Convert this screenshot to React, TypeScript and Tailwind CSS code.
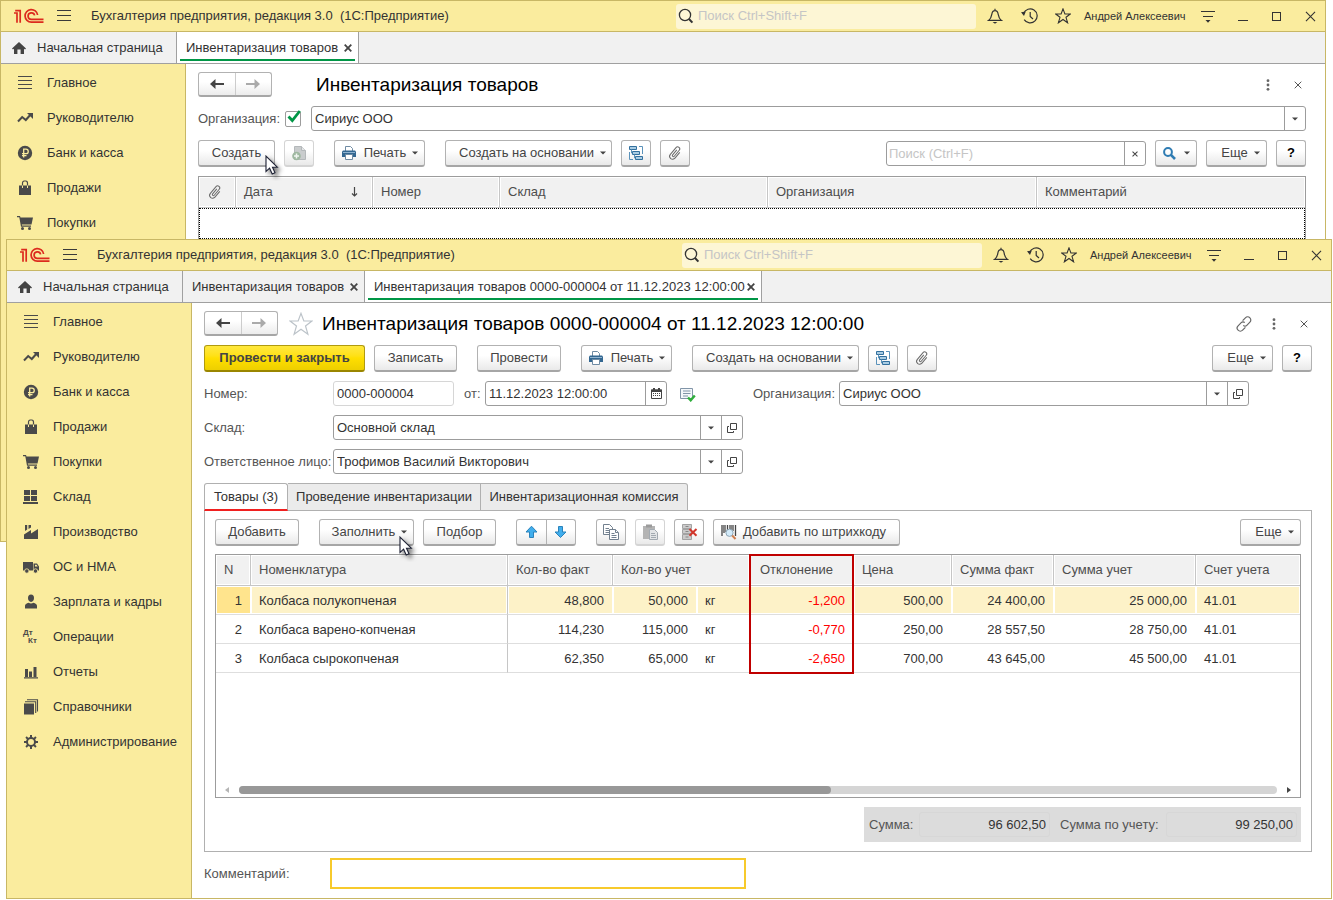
import React from "react";

type Glyph = { className?: string };

/* ---------- window chrome icons ---------- */

const Logo = () => (
  <svg width="30" height="16" viewBox="0 0 30 16" fill="none" stroke="#dc2a1e" strokeWidth="1.7" aria-label="1C">
    <path d="M0 5H3V14.800M1.200 2.600H6.200V14.800" />
    <path d="M23.600 7A6.300 6.300 0 1 0 17.300 14.200H29.500" />
    <path d="M20.600 7.400A3.300 3.300 0 1 0 17.300 11.400H29.500" />
  </svg>
);

const Burger = () => (
  <svg width="14" height="12" viewBox="0 0 14 12" stroke="#3a3a3a" strokeWidth="1">
    <path d="M0 .5H14M0 5.500H14M0 10.500H14" />
  </svg>
);

const SearchThin = () => (
  <svg width="16" height="16" viewBox="0 0 16 16" fill="none" stroke="#333" strokeWidth="1.300">
    <circle cx="7" cy="7" r="5.600" />
    <path d="M10.800 10.800L14.400 14.600" strokeWidth="2" />
  </svg>
);

const Bell = () => (
  <svg width="16" height="16" viewBox="0 0 16 16" fill="none" stroke="#333" strokeWidth="1.200">
    <path d="M8 .8V2.600M1.600 12.400H14.400C12 10.600 11.600 9 11.200 6.400C10.900 4 9.700 2.700 8 2.700S5.100 4 4.800 6.400C4.400 9 4 10.600 1.600 12.400Z" />
    <path d="M5.600 14H10.400L8 15.800Z" fill="#333" stroke="none" />
  </svg>
);

const History = () => (
  <svg width="17" height="16" viewBox="0 0 17 16" fill="none" stroke="#333" strokeWidth="1.200">
    <path d="M2.600 5.400A7 7 0 1 1 3.200 11.600" />
    <path d="M9.200 4V8.400L12 11" />
    <path d="M0 4.200L4.800 3.600L3 8Z" fill="#333" stroke="none" />
  </svg>
);

const StarThin = ({ size = 16, color = "#333" }: { size?: number; color?: string }) => (
  <svg width={size} height={size} viewBox="0 0 16 16" fill="none" stroke={color} strokeWidth={size > 20 ? 0.8 : 1.1}>
    <path d="M8 .9L9.900 6H15.300L11 9.300L12.600 14.800L8 11.500L3.400 14.800L5 9.300L.7 6H6.100Z" />
  </svg>
);

const Filter = () => (
  <svg width="14" height="13" viewBox="0 0 14 13" stroke="#333">
    <path d="M0 1.500H14M2 6.500H12" />
    <path d="M4.500 10H9.500L7 12.800Z" fill="#333" stroke="none" />
  </svg>
);

const Home = () => (
  <svg width="14" height="12" viewBox="0 0 14 12" fill="#444">
    <path d="M7 0L14 6.500L13 7.500L12 6.700V12H8.600V7.600H5.400V12H2V6.700L1 7.500L0 6.500Z" />
  </svg>
);

const Cross = ({ size = 8, width = 1.8, color = "#444" }: { size?: number; width?: number; color?: string }) => (
  <svg width={size} height={size} viewBox="0 0 8 8" stroke={color} strokeWidth={width} fill="none">
    <path d="M.7 .7L7.300 7.300M7.300 .7L.7 7.300" />
  </svg>
);

const Dots = () => (
  <svg width="4" height="12" viewBox="0 0 4 12" fill="#666">
    <circle cx="2" cy="1.700" r="1.400" />
    <circle cx="2" cy="6" r="1.400" />
    <circle cx="2" cy="10.300" r="1.400" />
  </svg>
);

const Chain = () => (
  <svg width="16" height="16" viewBox="0 0 16 16" fill="none" stroke="#666" strokeWidth="1.200">
    <path d="M6.600 4.600L9.400 1.800C10.600 .6 12.700 .6 13.900 1.800C15.100 3 15.100 5 13.900 6.200L10.800 9.300C9.800 10.300 8.200 10.300 7.300 9.300" />
    <path d="M9.400 11.400L6.600 14.200C5.400 15.400 3.300 15.400 2.100 14.200C.9 13 .9 11 2.100 9.800L5.200 6.700C6.200 5.700 7.800 5.700 8.700 6.700" />
  </svg>
);

/* ---------- sidebar icons ---------- */

const G = ({ children }: { children: React.ReactNode }) => (
  <svg width="16" height="16" viewBox="0 0 16 16" fill="#4a4a4a" className="shrink-0">
    {children}
  </svg>
);

const IMain = () => <G><path d="M1 1H15V2H1ZM1 5H15V6H1ZM1 9H15V10H1ZM1 13H15V14H1Z" /></G>;
const ITrend = () => (
  <G>
    <path d="M1 11.500L5.200 7L8.800 10L13.200 5" fill="none" stroke="#4a4a4a" strokeWidth="2" />
    <path d="M10 3H16V9Z" />
  </G>
);
const IRuble = () => (
  <G>
    <circle cx="8" cy="8" r="7.200" />
    <path d="M6.700 12.500V4.200H9A2.200 2.200 0 0 1 9 8.700H5M5 10.700H9.500" fill="none" stroke="#faec9e" strokeWidth="1.300" />
  </G>
);
const IBag = () => (
  <G>
    <path d="M2 5.500H14V15H2Z" />
    <path d="M5.500 7.500V3.200C5.500 1.800 6.200 1 7.200 1H8.800C9.800 1 10.500 1.800 10.500 3.200V7.500" fill="none" stroke="#4a4a4a" strokeWidth="1.200" />
    <path d="M5.500 5.500V8M10.500 5.500V8" stroke="#faec9e" strokeWidth="1" />
  </G>
);
const ICart = () => (
  <G>
    <path d="M0 1H3L3.500 2.500H16L14.500 9.500H4.800L5 10.500H14V11.800H4L2.300 2.300H0Z" />
    <circle cx="5.500" cy="13.500" r="1.500" />
    <circle cx="12.500" cy="13.500" r="1.500" />
  </G>
);
const IStore = () => <G><path d="M1 1H7V6H1ZM8 1H14V6H8ZM1 7H7V12H1ZM8 7H14V12H8ZM0 13H15V15H0Z" /></G>;
const IFactory = () => (
  <G>
    <path d="M1 15V10.500L8 6V9.500L15 5V15Z" />
    <path d="M2 1H4.200V5.500L2 7ZM5.500 1H8V3.500L5.500 5Z" />
  </G>
);
const ITruck = () => (
  <G>
    <path d="M0 3H10V11.500H0ZM10.500 4.500H14L16 7.500V11.500H10.500Z" />
    <path d="M12 5.700H13.500L14.700 7.500H12Z" fill="#faec9e" />
    <circle cx="3.800" cy="12" r="2.200" stroke="#faec9e" strokeWidth=".8" />
    <circle cx="12.500" cy="12" r="2.200" stroke="#faec9e" strokeWidth=".8" />
  </G>
);
const IPerson = () => (
  <G>
    <path d="M8 .5C10 .5 11 1.800 11 3.800C11 6.100 9.800 8 8 8S5 6.100 5 3.800C5 1.800 6 .5 8 .5Z" />
    <path d="M2 14.500V11.800C2 10.300 3.500 9.500 5.600 8.700C7 9.800 9 9.800 10.400 8.700C12.500 9.500 14 10.300 14 11.800V14.500Z" />
  </G>
);
const IDebit = () => (
  <span className="flex h-4 w-4 shrink-0 flex-col text-[8px] leading-[8px] font-bold text-[#4a4a4a]">
    <span>Дт</span>
    <span className="pl-[5px]">Кт</span>
  </span>
);
const IBars = () => <G><path d="M2 5H5V13H2ZM6 7.500H9V13H6ZM10.500 3H13.500V13H10.500ZM1 13.200H15V14.500H1Z" /></G>;
const IBooks = () => (
  <G>
    <path d="M1 4.500H11V15.500H1Z" />
    <path d="M2 2.700H12.700V14M4 .8H14.500V12.500" fill="none" stroke="#4a4a4a" strokeWidth="1.100" />
  </G>
);
const IGear = () => (
  <G>
    <circle cx="8" cy="8" r="4" fill="none" stroke="#4a4a4a" strokeWidth="2" />
    <path
      d="M8 1V4M8 12V15M1 8H4M12 8H15M3.050 3.050L5.100 5.100M10.900 10.900L12.950 12.950M3.050 12.950L5.100 10.900M10.900 5.100L12.950 3.050"
      stroke="#4a4a4a"
      strokeWidth="2"
    />
  </G>
);

/* ---------- toolbar icons ---------- */

const Caret = ({ className = "" }: Glyph) => (
  <svg width="6" height="4" viewBox="0 0 6 4" fill="#444" className={className}>
    <path d="M0 .5H6L3 3.500Z" />
  </svg>
);

const Arrow = ({ dim = false, flip = false }: { dim?: boolean; flip?: boolean }) => (
  <svg width="14" height="10" viewBox="0 0 14 10" fill={dim ? "#aaa" : "#444"}>
    {flip ? <path d="M14 5L8.500 0V4H0V6H8.500V10Z" /> : <path d="M0 5L5.500 0V4H14V6H5.500V10Z" />}
  </svg>
);

const Printer = () => (
  <svg width="16" height="16" viewBox="0 0 16 16">
    <path d="M4.500 6V1.500H9.500L11.500 3.500V6" fill="#fff" stroke="#6f8ba3" />
    <path d="M2 5.500H14L15 6.500V12H1V6.500Z" fill="#336791" />
    <path d="M2 7H14V8H2Z" fill="#8fb3d0" />
    <path d="M4.500 9.500H11.500V14.500H4.500Z" fill="#fff" stroke="#6f8ba3" />
  </svg>
);

const Structure = () => (
  <svg width="16" height="16" viewBox="0 0 16 16" fill="#a9cce3" stroke="#33709e" strokeWidth="1">
    <path d="M1.500 1.500H8.500V4.500H1.500ZM4.500 6.500H11.500V9.500H4.500ZM7.500 11.500H14.500V14.500H7.500Z" />
    <path d="M11 1.500H14.500V9M5 14.500H1.500V7M3.500 4.500V8H4.500M6.500 9.500V13H7.500" fill="none" stroke="#5b93bb" />
  </svg>
);

const Clip = () => (
  <svg width="16" height="16" viewBox="0 0 16 16" fill="none" stroke="#6a6a6a" strokeWidth="1">
    <path
      transform="rotate(40 8 8)"
      d="M11.300 4.500V12A3 3 0 0 1 5.300 12V3.200A2.100 2.100 0 0 1 9.500 3.200V11A1 1 0 0 1 7.400 11V4.500"
    />
  </svg>
);

const PageAdd = () => (
  <svg width="16" height="16" viewBox="0 0 16 16">
    <path d="M3.500 1.500H10.500L14.500 5.500V14.500H3.500Z" fill="#c9cccd" stroke="#b4b8ba" />
    <path d="M10.500 1.500V5.500H14.500" fill="#e4e6e7" stroke="#b4b8ba" />
    <circle cx="5.500" cy="11" r="4.300" fill="#9fb8a1" />
    <path d="M5.500 8.500V13.500M3 11H8" stroke="#f1f5f1" strokeWidth="1.500" />
  </svg>
);

const UpDown = ({ down = false }: { down?: boolean }) => (
  <svg width="13" height="14" viewBox="0 0 13 14" fill="#41aeed" stroke="#2b83bb" strokeWidth="1">
    {down ? <path d="M6.500 12.500L1 7H4.500V1.500H8.500V7H12Z" /> : <path d="M6.500 1.200L1 7H4.500V12.500H8.500V7H12Z" />}
  </svg>
);

const CopyPages = () => (
  <svg width="16" height="16" viewBox="0 0 16 16" fill="#fff" stroke="#72808f">
    <path d="M.5 .5H6.500L9.500 3.500V10.500H.5Z" />
    <path d="M2.500 4.500H6M2.500 6.500H6M2.500 8.500H6" />
    <path d="M6.500 5.500H12.500L15.500 8.500V15.500H6.500Z" />
    <path d="M12.500 5.500V8.500H15M8.500 9.500H11.500M8.500 11.500H13.500M8.500 13.500H13.500" />
  </svg>
);

const Paste = () => (
  <svg width="16" height="16" viewBox="0 0 16 16">
    <path d="M1 2H13V15H1Z" fill="#b4b4b4" />
    <path d="M4 .5H10V3.500H4Z" fill="#9b9b9b" />
    <path d="M7.500 5.500H12.500L15.500 8.500V15.500H7.500Z" fill="#e3e5e7" stroke="#a3aab1" />
    <path d="M9 9.500H13M9 11.500H14M9 13.500H14" stroke="#a3aab1" />
  </svg>
);

const ClearRows = () => (
  <svg width="17" height="16" viewBox="0 0 17 16">
    <path d="M1.500 .5H10.500V4.500H1.500ZM1.500 5.500H10.500V9.500H1.500ZM1.500 10.500H10.500V15.500H1.500Z" fill="#cbcbcb" stroke="#a3a3a3" />
    <path d="M4.500 2.500H7.500M4.500 7.500H7.500M4.500 13H7.500" stroke="#888" />
    <path d="M8.500 5L15.500 11.800M15.500 5L8.500 11.800" stroke="#d2372c" strokeWidth="2" />
  </svg>
);

const Barcode = () => (
  <svg width="16" height="16" viewBox="0 0 16 16" fill="none">
    <path d="M1 1V12M3 1V9M6.500 1V7M9 1V5M11 1V6M14.500 1V12" stroke="#444" strokeWidth="1.300" />
    <path d="M4.500 1V8M12.500 1V7" stroke="#555" strokeWidth=".7" />
    <circle cx="8.500" cy="8.800" r="3.600" fill="#d3ebfa" stroke="#8da5b5" />
    <path d="M11.200 11.500L14.500 15" stroke="#cf7f4f" strokeWidth="2" />
  </svg>
);

const SearchBlue = () => (
  <svg width="13" height="13" viewBox="0 0 13 13" fill="none" stroke="#2f7cb3">
    <circle cx="5" cy="5" r="3.900" strokeWidth="2" />
    <path d="M7.700 7.700L12 12" strokeWidth="2.600" />
  </svg>
);

const Calendar = () => (
  <svg width="11" height="11" viewBox="0 0 11 11">
    <path d="M.5 2H10.500V10.500H.5Z" fill="#fff" stroke="#444" />
    <path d="M0 1.500H11V4H0ZM2 0H4V2H2ZM7 0H9V2H7Z" fill="#444" />
    <path d="M2 5.500H9M2 7.500H9" stroke="#444" strokeDasharray="1 1" />
  </svg>
);

const OpenForm = () => (
  <svg width="10" height="10" viewBox="0 0 10 10" fill="none" stroke="#444">
    <path d="M3.500 .5H9.500V6.500H3.500Z" />
    <path d="M2 3.500H.5V9.500H6.500V8" />
  </svg>
);

const ListCheck = () => (
  <svg width="16" height="14" viewBox="0 0 16 14">
    <path d="M.5 .5H12.500V10.500H.5Z" fill="#f4f7fa" stroke="#8195a8" />
    <path d="M3 3H10.500M3 5.500H10.500M3 8H8" stroke="#8195a8" />
    <path d="M8 9.500L10.700 12.300L14.800 7.500" fill="none" stroke="#2fae3c" strokeWidth="2.400" />
  </svg>
);

const Pointer = ({ className = "" }: Glyph) => (
  <svg width="20" height="26" viewBox="0 0 20 26" className={"pointer-events-none absolute z-10 " + className}>
    <path
      d="M1 1V16.500L4.600 13.200L7.200 19L10 17.800L7.500 12.200H12.300Z"
      fill="#fff"
      stroke="#1e2235"
      strokeWidth="1.100"
      className="drop-shadow-[3px_3px_2px_rgba(0,0,0,0.5)]"
    />
  </svg>
);

/* ---------- controls ---------- */

type BtnProps = {
  className?: string;
  children: React.ReactNode;
  label?: string;
  disabled?: boolean;
};

const Btn = ({ className = "", children, label, disabled }: BtnProps) => (
  <button
    type="button"
    aria-label={label}
    disabled={disabled}
    className={
      "relative flex h-[27px] shrink-0 items-center justify-center rounded-[3px] border border-b-2 bg-linear-to-b from-white from-40% to-[#e9e9e9] whitespace-nowrap text-[#444] " +
      (disabled ? "border-[#d4d4d4] " : "border-[#b2b2b2] border-b-[#a6a6a6] ") +
      className
    }
  >
    {children}
  </button>
);

const HelpBtn = () => (
  <Btn className="ml-[9px] w-[30px] font-bold" label="Справка">
    <span className="text-black">?</span>
  </Btn>
);

const NavButtons = () => (
  <div className="flex h-[25px] w-[74px] shrink-0 rounded-[3px] border border-b-2 border-[#b2b2b2] border-b-[#a6a6a6] bg-linear-to-b from-white from-40% to-[#ececec]">
    <button type="button" aria-label="Назад" className="flex flex-1 items-center justify-center border-r border-[#ccc]">
      <Arrow />
    </button>
    <button type="button" aria-label="Вперед" className="flex flex-1 items-center justify-center">
      <Arrow dim flip />
    </button>
  </div>
);

type FieldProps = { id: string; value: string; className?: string; open?: boolean; label?: string };

const Combo = ({ id, value, className = "", open = true, label }: FieldProps) => (
  <div className={"flex h-[25px] rounded-[3px] border border-[#9c9c9c] bg-white " + className}>
    <input
      id={id}
      aria-label={label}
      defaultValue={value}
      className="min-w-0 flex-1 bg-transparent px-[3px] text-[#333] outline-none"
    />
    <button type="button" aria-label="Выбрать" className="flex w-[21px] items-center justify-center border-l border-[#9c9c9c]">
      <Caret />
    </button>
    {open && (
      <button type="button" aria-label="Открыть" className="flex w-[21px] items-center justify-center border-l border-[#9c9c9c]">
        <OpenForm />
      </button>
    )}
  </div>
);

/* ---------- window frame ---------- */

const SECTIONS: { name: string; Icon: () => React.ReactElement }[] = [
  { name: "Главное", Icon: IMain },
  { name: "Руководителю", Icon: ITrend },
  { name: "Банк и касса", Icon: IRuble },
  { name: "Продажи", Icon: IBag },
  { name: "Покупки", Icon: ICart },
  { name: "Склад", Icon: IStore },
  { name: "Производство", Icon: IFactory },
  { name: "ОС и НМА", Icon: ITruck },
  { name: "Зарплата и кадры", Icon: IPerson },
  { name: "Операции", Icon: IDebit },
  { name: "Отчеты", Icon: IBars },
  { name: "Справочники", Icon: IBooks },
  { name: "Администрирование", Icon: IGear },
];

const TitleBar = () => (
  <header className="flex h-[31px] shrink-0 items-center border-b border-[#c8b765] bg-[#faec9e] pr-[9px] pl-[13px] text-[#333]">
    <Logo />
    <button type="button" aria-label="Меню" className="ml-[13px]">
      <Burger />
    </button>
    <span className="ml-5 whitespace-pre">{"Бухгалтерия предприятия, редакция 3.0  (1С:Предприятие)"}</span>
    <label className="ml-auto flex h-[25px] w-[300px] items-center gap-1 rounded-[3px] bg-[#fdf6d5] pl-[2px]">
      <SearchThin />
      <input
        aria-label="Поиск"
        placeholder="Поиск Ctrl+Shift+F"
        className="min-w-0 flex-1 bg-transparent outline-none placeholder:text-[#c5c5c5]"
      />
    </label>
    <button type="button" aria-label="Уведомления" className="ml-[11px]"><Bell /></button>
    <button type="button" aria-label="История" className="ml-[18px]"><History /></button>
    <button type="button" aria-label="Избранное" className="ml-[17px]"><StarThin /></button>
    <span className="ml-[13px] w-[104px] text-[11px] whitespace-nowrap">Андрей Алексеевич</span>
    <button type="button" aria-label="Настройки" className="ml-[13px]"><Filter /></button>
    <button type="button" aria-label="Свернуть" className="ml-[23px] flex h-[10px] w-[10px] items-end border-b border-[#333]" />
    <button type="button" aria-label="Развернуть" className="ml-6 h-[9px] w-[9px] border border-[#333]" />
    <button type="button" aria-label="Закрыть" className="ml-6"><Cross size={11} width={0.8} color="#333" /></button>
  </header>
);

const TabBar = ({ tabs }: { tabs: { title: string; width: string }[] }) => (
  <nav className="flex h-8 shrink-0 border-b border-[#a0a0a0] bg-[#f1f1f1] text-[#333]">
    <a href="#home" className="flex w-[176px] items-center gap-[11px] border-r border-[#a0a0a0] pl-[11px]">
      <Home />
      <span>Начальная страница</span>
    </a>
    {tabs.map(({ title, width }, i) => {
      const active = i === tabs.length - 1;
      return (
        <div
          key={title}
          className={
            "relative flex items-center justify-between border-r border-[#a0a0a0] pr-[6px] pl-[9px] " +
            width +
            (active ? " bg-white" : "")
          }
        >
          <a href={"#tab" + i} className="whitespace-nowrap">{title}</a>
          <button type="button" aria-label="Закрыть вкладку"><Cross /></button>
          {active && <span className="absolute right-[3px] bottom-[2px] left-[3px] h-[2px] bg-[#009646]" />}
        </div>
      );
    })}
  </nav>
);

type FrameProps = {
  tabs: { title: string; width: string }[];
  sections: typeof SECTIONS;
  className?: string;
  children: React.ReactNode;
};

const Frame = ({ tabs, sections, className = "", children }: FrameProps) => (
  <section className={"flex flex-col border border-[#c8b765] bg-white " + className}>
    <TitleBar />
    <TabBar tabs={tabs} />
    <div className="flex min-h-0 flex-1">
      <aside className="w-[185px] shrink-0 border-r border-[#c8b765] bg-[#faec9e] pt-px">
        <ul>
          {sections.map(({ name, Icon }) => (
            <li key={name}>
              <a href="#section" className="flex h-[35px] items-center gap-[14px] pl-4 text-[#333]">
                <Icon />
                <span className="whitespace-nowrap">{name}</span>
              </a>
            </li>
          ))}
        </ul>
      </aside>
      <main className="flex min-w-0 flex-1 flex-col pt-2 pr-[19px] pl-3">{children}</main>
    </div>
  </section>
);

const TH = "relative border-r border-b border-[#c6c6c6] bg-[#f1f1f1] px-2 text-left font-normal text-[#4d4d4d] shadow-[inset_0_0_0_1px_#fff] whitespace-nowrap last:border-r-0";

/* ---------- list window ---------- */

const ListWindow = () => (
  <Frame
    tabs={[{ title: "Инвентаризация товаров", width: "w-[182px]" }]}
    sections={SECTIONS.slice(0, 5)}
    className="absolute top-0 right-[7px] left-0 h-[542px]"
  >
    <div className="flex items-center">
      <NavButtons />
      <h1 className="ml-[44px] text-[19px] leading-[25px] text-black">Инвентаризация товаров</h1>
      <button type="button" aria-label="Действия" className="ml-auto"><Dots /></button>
      <button type="button" aria-label="Закрыть форму" className="mr-1 ml-6"><Cross width={1} color="#555" /></button>
    </div>

    <div className="mt-[9px] flex items-center">
      <label htmlFor="list-use-org" className="w-[87px] text-[#555]">Организация:</label>
      <span className="relative flex h-4 w-4">
        <input
          id="list-use-org"
          type="checkbox"
          defaultChecked
          className="h-4 w-4 appearance-none rounded-[2px] border border-[#9c9c9c] bg-white"
        />
        <svg width="16" height="16" viewBox="0 0 16 16" className="pointer-events-none absolute -top-px left-px" fill="none">
          <path d="M2.500 6.500L6.300 10.500L13.800 1" stroke="#009646" strokeWidth="2.800" />
        </svg>
      </span>
      <Combo id="list-org" label="Организация" value="Сириус ООО" open={false} className="ml-[10px] flex-1" />
    </div>

    <div className="mt-[9px] flex items-center">
      <Btn className="w-[77px]">
        Создать
        <Pointer className="top-[14px] left-[66px]" />
      </Btn>
      <Btn className="ml-[9px] w-[30px]" label="Скопировать" disabled><PageAdd /></Btn>
      <Btn className="ml-5 w-[91px] gap-[7px]">
        <Printer />
        Печать
        <Caret className="-ml-px" />
      </Btn>
      <Btn className="ml-5 w-[167px] gap-[6px] pl-2">
        Создать на основании
        <Caret />
      </Btn>
      <Btn className="ml-[9px] w-[30px]" label="Структура подчиненности"><Structure /></Btn>
      <Btn className="ml-[9px] w-[30px]" label="Файлы"><Clip /></Btn>
      <div className="ml-auto flex h-[25px] w-[260px] rounded-[3px] border border-[#9c9c9c]">
        <input
          aria-label="Поиск по списку"
          placeholder="Поиск (Ctrl+F)"
          className="min-w-0 flex-1 bg-transparent px-[2px] outline-none placeholder:text-[#c5c5c5]"
        />
        <button type="button" aria-label="Очистить" className="flex w-[21px] items-center justify-center border-l border-[#9c9c9c]">
          <Cross size={6} width={1.4} />
        </button>
      </div>
      <Btn className="ml-[9px] w-[42px] gap-2" label="Найти">
        <SearchBlue />
        <Caret />
      </Btn>
      <Btn className="ml-[9px] w-[61px] gap-[6px] pl-2">
        Еще
        <Caret />
      </Btn>
      <HelpBtn />
    </div>

    <div className="mt-[9px] flex-1 border border-[#9c9c9c]">
      <table className="w-full table-fixed border-separate border-spacing-0">
        <colgroup>
          <col className="w-[37px]" />
          <col className="w-[137px]" />
          <col className="w-[127px]" />
          <col className="w-[268px]" />
          <col className="w-[269px]" />
          <col />
        </colgroup>
        <thead>
          <tr className="h-[31px]">
            <th className={TH} aria-label="Файлы"><Clip /></th>
            <th className={TH}>
              <span className="flex items-center justify-between pr-[6px]">
                Дата
                <svg width="7" height="10" viewBox="0 0 7 10" fill="none" stroke="#444" strokeWidth="1.200">
                  <path d="M3.500 0V9M1 6.500L3.500 9L6 6.500" />
                </svg>
              </span>
            </th>
            <th className={TH}>Номер</th>
            <th className={TH}>Склад</th>
            <th className={TH}>Организация</th>
            <th className={TH}>Комментарий</th>
          </tr>
        </thead>
        <tbody>
          <tr className="h-[31px]">
            <td colSpan={6} className="border border-dotted border-black" />
          </tr>
        </tbody>
      </table>
    </div>
  </Frame>
);

/* ---------- document window ---------- */

const ROWS = [
  ["1", "Колбаса полукопченая", "48,800", "50,000", "кг", "-1,200", "500,00", "24 400,00", "25 000,00", "41.01"],
  ["2", "Колбаса варено-копченая", "114,230", "115,000", "кг", "-0,770", "250,00", "28 557,50", "28 750,00", "41.01"],
  ["3", "Колбаса сырокопченая", "62,350", "65,000", "кг", "-2,650", "700,00", "43 645,00", "45 500,00", "41.01"],
];

const cellClass = (col: number, selected: boolean) => {
  const base = "border-b border-b-[#dedede] pt-[2px] whitespace-nowrap ";
  const align = col === 1 || col === 4 || col === 9 ? "px-2 text-left " : "pr-[9px] text-right ";
  const tone = col === 5 ? "text-[#f00] " : "text-[#333] ";
  const fill = selected ? (col === 0 ? "bg-[#ffe48d] " : "bg-[#fdf2c8] ") + "shadow-[inset_0_0_0_1px_#fff] " : "";
  const edge = col === 1 ? "border-r border-r-[#c6c6c6]" : "";
  return base + align + tone + fill + edge;
};

const GoodsTable = () => (
  <div className="mx-[10px] mt-2 flex h-[244px] flex-col border border-[#9c9c9c]">
    <table className="w-full table-fixed border-separate border-spacing-0">
      <colgroup>
        <col className="w-[35px]" />
        <col className="w-[257px]" />
        <col className="w-[105px]" />
        <col className="w-[84px]" />
        <col className="w-[53px]" />
        <col className="w-[104px]" />
        <col className="w-[98px]" />
        <col className="w-[102px]" />
        <col className="w-[142px]" />
        <col />
      </colgroup>
      <thead>
        <tr className="h-[31px]">
          <th className={TH}>N</th>
          <th className={TH}>Номенклатура</th>
          <th className={TH}>Кол-во факт</th>
          <th className={TH} colSpan={2}>Кол-во учет</th>
          <th className={TH}>
            <span className="pl-[2px]">Отклонение</span>
            <span className="absolute -top-px -right-px -left-px z-10 h-[120px] border-2 border-[#c00000]" />
          </th>
          <th className={TH}>Цена</th>
          <th className={TH}>Сумма факт</th>
          <th className={TH}>Сумма учет</th>
          <th className={TH}>Счет учета</th>
        </tr>
      </thead>
      <tbody>
        {ROWS.map((row, r) => (
          <tr key={row[0]} className="h-[29px]">
            {row.map((value, c) => (
              <td key={c} className={cellClass(c, r === 0)}>{value}</td>
            ))}
          </tr>
        ))}
      </tbody>
    </table>
    <div className="mt-auto flex h-[15px] items-center px-2">
      <svg width="5" height="8" viewBox="0 0 5 8" fill="#b5b5b5"><path d="M5 1V7L1 4Z" /></svg>
      <div className="mx-[10px] h-2 flex-1 rounded-full bg-[#d5d5d5]">
        <div className="h-2 w-[57%] rounded-full bg-[#989898]" />
      </div>
      <svg width="5" height="8" viewBox="0 0 5 8" fill="#444"><path d="M0 1V7L4 4Z" /></svg>
    </div>
  </div>
);

const DocumentWindow = () => (
  <Frame
    tabs={[
      { title: "Инвентаризация товаров", width: "w-[182px]" },
      { title: "Инвентаризация товаров 0000-000004 от 11.12.2023 12:00:00", width: "w-[397px]" },
    ]}
    sections={SECTIONS}
    className="relative"
  >
    <div className="flex items-center">
      <NavButtons />
      <button type="button" aria-label="В избранное" className="ml-[11px]"><StarThin size={24} color="#bcc3c9" /></button>
      <h1 className="ml-[9px] text-[19px] leading-[25px] whitespace-nowrap text-black">
        Инвентаризация товаров 0000-000004 от 11.12.2023 12:00:00
      </h1>
      <button type="button" aria-label="Получить ссылку" className="ml-auto"><Chain /></button>
      <button type="button" aria-label="Действия" className="ml-5"><Dots /></button>
      <button type="button" aria-label="Закрыть форму" className="mr-1 ml-6"><Cross width={1} color="#555" /></button>
    </div>

    <div className="mt-[9px] flex items-center">
      <button
        type="button"
        className="h-[27px] w-[161px] rounded-[3px] border border-b-2 border-[#b09a10] border-b-[#9a8600] bg-linear-to-b from-[#ffe83c] via-[#ffdf00] to-[#edcf00] font-bold whitespace-nowrap text-[#444]"
      >
        Провести и закрыть
      </button>
      <Btn className="ml-[9px] w-[83px]">Записать</Btn>
      <Btn className="ml-5 w-[84px]">Провести</Btn>
      <Btn className="ml-5 w-[91px] gap-[7px]">
        <Printer />
        Печать
        <Caret className="-ml-px" />
      </Btn>
      <Btn className="ml-5 w-[167px] gap-[6px] pl-2">
        Создать на основании
        <Caret />
      </Btn>
      <Btn className="ml-[9px] w-[30px]" label="Структура подчиненности"><Structure /></Btn>
      <Btn className="ml-[9px] w-[30px]" label="Файлы"><Clip /></Btn>
      <Btn className="ml-auto w-[61px] gap-[6px] pl-2">
        Еще
        <Caret />
      </Btn>
      <HelpBtn />
    </div>

    <div className="mt-[9px] flex flex-col gap-[9px] text-[#555]">
      <div className="flex items-center">
        <label htmlFor="doc-number" className="w-[129px]">Номер:</label>
        <input
          id="doc-number"
          readOnly
          value="0000-000004"
          className="h-[25px] w-[121px] rounded-[3px] border border-[#d6d6d6] px-[3px] text-[#333]"
        />
        <label htmlFor="doc-date" className="ml-[10px] w-[21px]">от:</label>
        <div className="flex h-[25px] w-[182px] rounded-[3px] border border-[#9c9c9c]">
          <input id="doc-date" defaultValue="11.12.2023 12:00:00" className="min-w-0 flex-1 bg-transparent px-[3px] text-[#333] outline-none" />
          <button type="button" aria-label="Календарь" className="flex w-[21px] items-center justify-center border-l border-[#9c9c9c]">
            <Calendar />
          </button>
        </div>
        <button type="button" aria-label="Движения документа" className="mt-[2px] ml-[13px]"><ListCheck /></button>
        <label htmlFor="doc-org" className="ml-[57px] w-[86px]">Организация:</label>
        <Combo id="doc-org" value="Сириус ООО" className="w-[410px]" />
      </div>
      <div className="flex items-center">
        <label htmlFor="doc-store" className="w-[129px]">Склад:</label>
        <Combo id="doc-store" value="Основной склад" className="w-[410px]" />
      </div>
      <div className="flex items-center">
        <label htmlFor="doc-person" className="w-[129px] whitespace-nowrap">Ответственное лицо:</label>
        <Combo id="doc-person" value="Трофимов Василий Викторович" className="w-[410px]" />
      </div>
    </div>

    <div role="tablist" className="relative mt-[9px] -mb-px flex h-7 text-[#333]">
      <button type="button" role="tab" aria-selected="true" className="w-[84px] rounded-t-[3px] border border-b-2 border-[#b0b0b0] border-b-[#f02020] bg-white">
        Товары (3)
      </button>
      <button type="button" role="tab" aria-selected="false" className="w-[193px] border border-l-0 border-[#b0b0b0] bg-[#ebebeb] whitespace-nowrap">
        Проведение инвентаризации
      </button>
      <button type="button" role="tab" aria-selected="false" className="w-[207px] rounded-tr-[3px] border border-l-0 border-[#b0b0b0] bg-[#ebebeb] whitespace-nowrap">
        Инвентаризационная комиссия
      </button>
    </div>

    <div className="border border-[#b0b0b0] pt-2 pb-[9px]">
      <div className="flex items-center px-[10px]">
        <Btn className="w-[84px]">Добавить</Btn>
        <Btn className="ml-5 w-[95px] gap-[6px] pl-[6px]">
          Заполнить
          <Caret />
          <Pointer className="top-[16px] left-[79px]" />
        </Btn>
        <Btn className="ml-[9px] w-[73px]">Подбор</Btn>
        <div className="ml-5 flex h-[27px] w-[60px] rounded-[3px] border border-b-2 border-[#b2b2b2] border-b-[#a6a6a6] bg-linear-to-b from-white from-40% to-[#e9e9e9]">
          <button type="button" aria-label="Переместить вверх" className="flex flex-1 items-center justify-center border-r border-[#b2b2b2]"><UpDown /></button>
          <button type="button" aria-label="Переместить вниз" className="flex flex-1 items-center justify-center"><UpDown down /></button>
        </div>
        <Btn className="ml-5 w-[30px]" label="Копировать строки"><CopyPages /></Btn>
        <Btn className="ml-[9px] w-[30px]" label="Вставить строки" disabled><Paste /></Btn>
        <Btn className="ml-[9px] w-[30px]" label="Очистить"><ClearRows /></Btn>
        <Btn className="ml-[9px] w-[187px] gap-[6px] pr-[6px]">
          <Barcode />
          Добавить по штрихкоду
        </Btn>
        <Btn className="ml-auto w-[61px] gap-[6px] pl-2">
          Еще
          <Caret />
        </Btn>
      </div>

      <GoodsTable />

      <div className="mt-[9px] mr-[10px] ml-auto flex h-[35px] w-[437px] items-center bg-[#dcdcdc] pr-1 pl-[5px] text-[#555]">
        <label htmlFor="sum-fact" className="w-[50px]">Сумма:</label>
        <input
          id="sum-fact"
          readOnly
          value="96 602,50"
          className="h-[25px] w-[131px] rounded-[3px] border border-[#d7d7d7] px-[3px] text-right text-[#333]"
        />
        <label htmlFor="sum-book" className="ml-[10px] flex-1 whitespace-nowrap">Сумма по учету:</label>
        <input
          id="sum-book"
          readOnly
          value="99 250,00"
          className="h-[25px] w-[131px] rounded-[3px] border border-[#d7d7d7] px-[3px] text-right text-[#333]"
        />
      </div>
    </div>

    <div className="mt-[6px] mb-[9px] flex items-center">
      <label htmlFor="doc-comment" className="w-[126px] text-[#555]">Комментарий:</label>
      <input id="doc-comment" className="h-[31px] w-[416px] border-2 border-[#f7ca2c] px-[3px] outline-none" />
    </div>
  </Frame>
);

export default function App() {
  return (
    <div className="relative bg-white pt-[239px] pr-px pb-px pl-[6px] font-['Liberation_Sans',Arial,sans-serif] text-[13px] leading-4">
      <ListWindow />
      <DocumentWindow />
    </div>
  );
}
